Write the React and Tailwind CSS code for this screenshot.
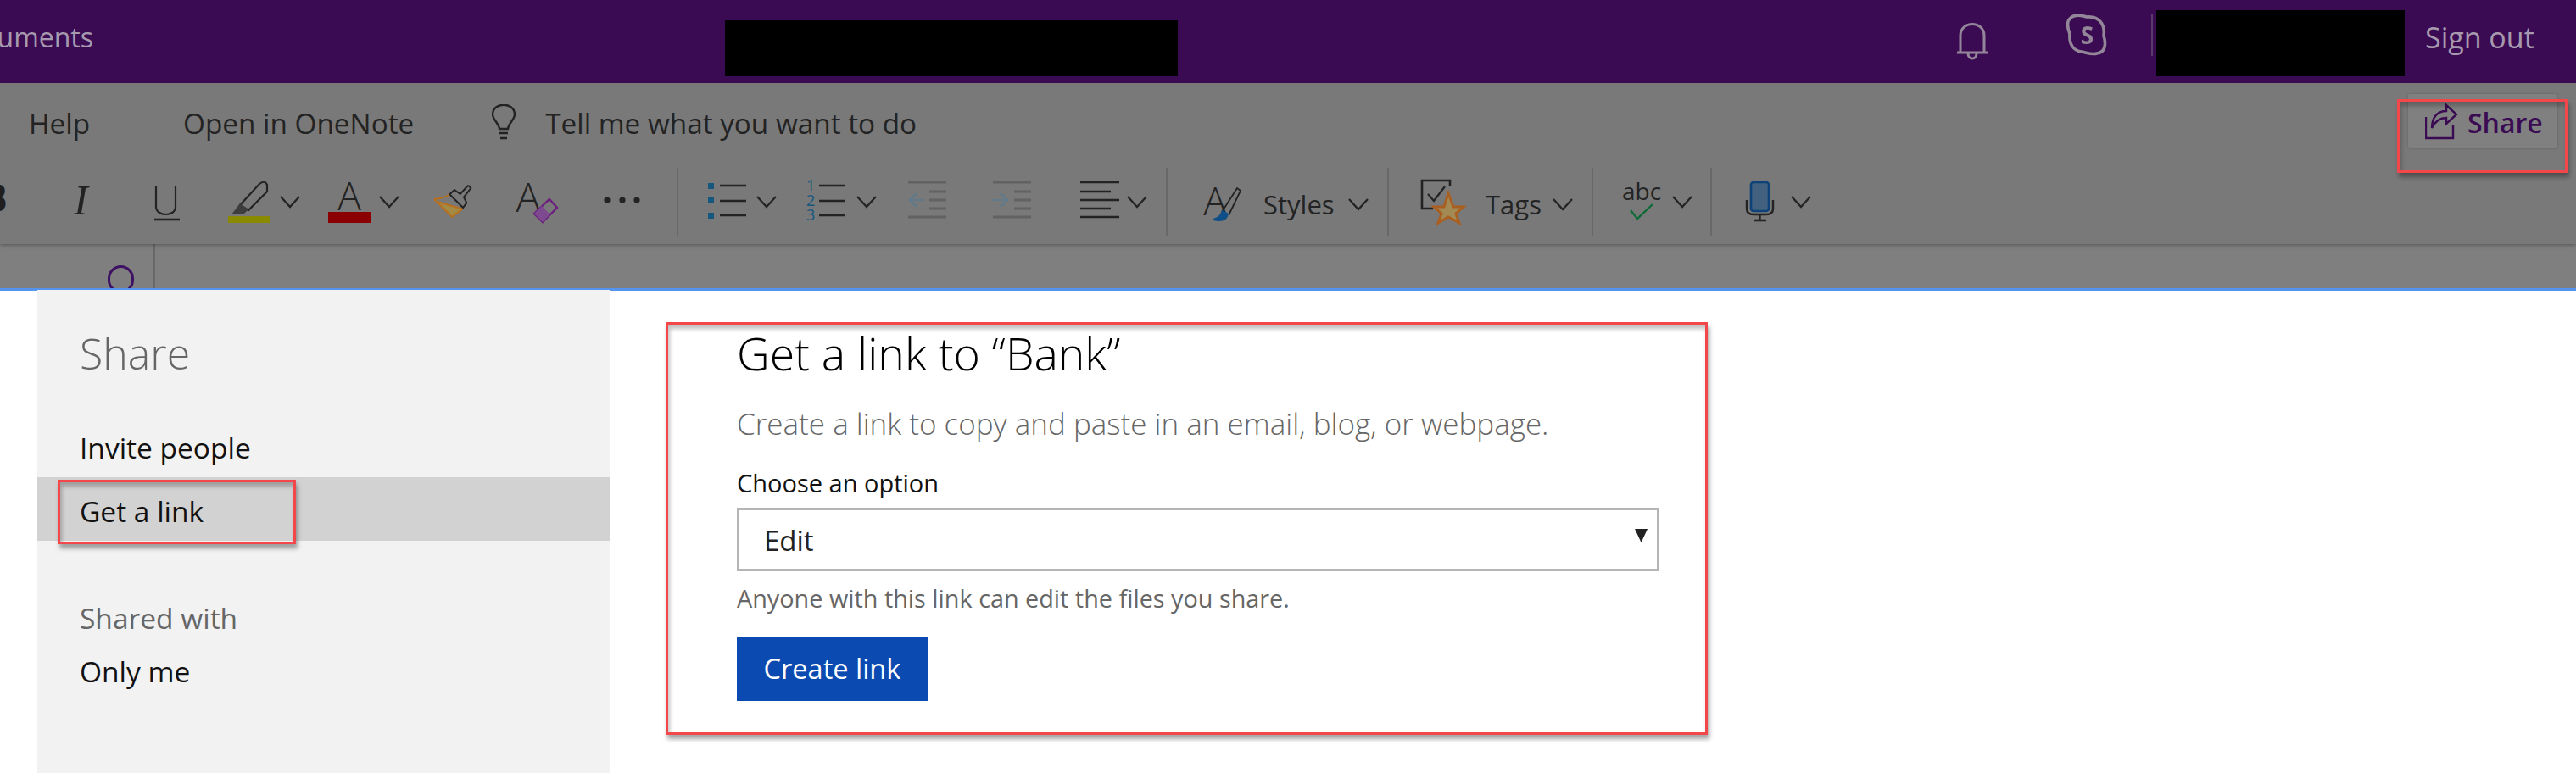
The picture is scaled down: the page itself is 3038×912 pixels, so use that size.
import React from "react";

const ink = "#232323";

function Chevron({ ml, low }) {
  const y = low ? 3 : 0;
  return (
    <svg width="24" height="80" style={{ marginLeft: ml }} className="shrink-0">
      <polyline points={`1,${34 + y} 12,${46 + y} 23,${34 + y}`} fill="none" stroke={ink} strokeWidth="2.2" />
    </svg>
  );
}

function Divider({ ml }) {
  return <div style={{ marginLeft: ml }} className="w-[2px] h-[80px] shrink-0 bg-[#686868]" />;
}

function Ico({ w, ml, children }) {
  return (
    <svg width={w} height="80" style={{ marginLeft: ml }} className="shrink-0 overflow-visible">
      {children}
    </svg>
  );
}

function FormatRow() {
  return (
    <div className="flex items-center h-[80px] text-[#232323]">
      <div className="w-[11px] h-[80px] overflow-hidden shrink-0 relative">
        <svg width="40" height="80" className="-ml-[22px]">
          <text x="0" y="52" fontSize="46" fontWeight="700" fontFamily="Open Sans" fill="#1f1f1f">B</text>
        </svg>
      </div>
      <Ico w={24} ml={76}>
        <text x="0" y="55" fontSize="50" fontStyle="italic" fontFamily="Liberation Serif" fill={ink}>I</text>
      </Ico>
      <Ico w={30} ml={71}>
        <path d="M2 21 V46 C2 58 25 58 25 46 V21" fill="none" stroke={ink} strokeWidth="2.2" />
        <line x1="0" x2="30" y1="61" y2="61" stroke={ink} strokeWidth="2.6" />
      </Ico>
      <Ico w={50} ml={57}>
        <path d="M14 44 L37 19 Q43 14 46 20 L46 28 L24 50 Z" fill="none" stroke={ink} strokeWidth="2.2" />
        <path d="M4 55 L14 42 L24 49 L18 55 Z" fill="#3d3d3d" />
        <rect x="0" y="57" width="50" height="8" fill="#8a8a00" />
      </Ico>
      <Chevron ml={11} />
      <Ico w={50} ml={33}>
        <text x="25" y="50" textAnchor="middle" fontSize="46" fontFamily="Open Sans" fontWeight="300" fill={ink}>A</text>
        <rect x="0" y="52" width="50" height="13" fill="#8b0000" />
      </Ico>
      <Chevron ml={10} />
      <Ico w={44} ml={41}>
        <path d="M4 40.3 L34 48.7 L21.3 57 Z" fill="#a38a45" />
        <path d="M0 37 Q12 36 18.3 31.3 M0 37 L21.3 58 L34 48 M4 40 L34 48.7" fill="none" stroke="#b8701f" strokeWidth="2" />
        <path d="M18.3 31.3 L24 26 L30.7 31 L39 22 Q41 20 43.3 24 L35 34.7 L38.3 41.3 L34 47 Z" fill="none" stroke={ink} strokeWidth="2" />
      </Ico>
      <Ico w={47} ml={55}>
        <text x="12" y="52" textAnchor="middle" fontSize="48" fontFamily="Open Sans" fontWeight="300" fill={ink}>A</text>
        <path d="M37 37 L46 47 L29 64 L19 54 Z" fill="none" stroke="#6b1f7f" strokeWidth="2.4" />
        <path d="M28 45 L37.7 55 L29 64 L19 54 Z" fill="#7d4a8f" />
      </Ico>
      <Ico w={43} ml={54}>
        <circle cx="4" cy="38" r="3.6" fill={ink} />
        <circle cx="22" cy="38" r="3.6" fill={ink} />
        <circle cx="39" cy="38" r="3.6" fill={ink} />
      </Ico>
      <Divider ml={43} />
      {/* lists */}
      <Ico w={45} ml={35}>
        <rect x="0" y="18" width="7" height="7" fill="#15577f" />
        <rect x="0" y="35" width="7" height="7" fill="#15577f" />
        <rect x="0" y="53" width="7" height="7" fill="#15577f" />
        <path d="M14 21 H45 M14 39 H45 M14 56 H45" stroke={ink} strokeWidth="2.4" />
      </Ico>
      <Chevron ml={12} />
      <Ico w={46} ml={35}>
        <text x="0" y="27" fontSize="18" fontFamily="Open Sans" fill="#15577f">1</text>
        <text x="0" y="45" fontSize="18" fontFamily="Open Sans" fill="#15577f">2</text>
        <text x="0" y="62" fontSize="18" fontFamily="Open Sans" fill="#15577f">3</text>
        <path d="M15 21 H46 M15 39 H46 M15 56 H46" stroke={ink} strokeWidth="2.4" />
      </Ico>
      <Chevron ml={13} />
      <Ico w={45} ml={37}>
        <path d="M0 17 H45 M25 28 H45 M25 38 H45 M25 48 H45 M0 58 H45" stroke="#626262" strokeWidth="3" />
        <path d="M19 38 H2 M10 30 L2 38 L10 46" fill="none" stroke="#5f7a8c" strokeWidth="2.2" />
      </Ico>
      <Ico w={45} ml={55}>
        <path d="M0 17 H45 M25 28 H45 M25 38 H45 M25 48 H45 M0 58 H45" stroke="#626262" strokeWidth="3" />
        <path d="M0 38 H17 M9 30 L17 38 L9 46" fill="none" stroke="#5f7a8c" strokeWidth="2.2" />
      </Ico>
      <Ico w={46} ml={58}>
        <path d="M0 17 H46 M0 28 H36 M0 38 H46 M0 48 H36 M0 58 H46" stroke={ink} strokeWidth="2.6" />
      </Ico>
      <Chevron ml={9} />
      <Divider ml={22} />
      {/* styles */}
      <Ico w={45} ml={42}>
        <text x="14" y="56" textAnchor="middle" fontSize="46" fontFamily="Open Sans" fontWeight="300" fill={ink}>A</text>
        <path d="M22 52 L40 24 L44 27 L30 56" fill="none" stroke={ink} strokeWidth="1.8" />
        <path d="M12 60 Q20 58 22 50 L30 54 Q28 66 12 62 Z" fill="#0d4f86" />
      </Ico>
      <span className="ml-[26px] mt-[6px] w-[86px] shrink-0 text-[31px] leading-none whitespace-nowrap">Styles</span>
      <Chevron ml={14} low />
      <Divider ml={22} />
      {/* tags */}
      <Ico w={50} ml={38}>
        <path d="M34 22 V15 H1 V48 H14" fill="none" stroke={ink} strokeWidth="2.6" />
        <polyline points="8,31 15,39 28,22" fill="none" stroke={ink} strokeWidth="2.2" />
        <polygon points="32,30 38,46 50,46 41,54 45,65 32,58 20,65 24,54 15,46 27,46" fill="#a38a55" stroke="#a95f20" strokeWidth="3" />
      </Ico>
      <span className="ml-[26px] mt-[6px] w-[66px] shrink-0 text-[31px] leading-none whitespace-nowrap">Tags</span>
      <Chevron ml={13} low />
      <Divider ml={22} />
      {/* spelling */}
      <Ico w={44} ml={36}>
        <text x="21" y="38" textAnchor="middle" fontSize="28" fontFamily="Open Sans" fill={ink}>abc</text>
        <polyline points="8,50 16,60 34,43" fill="none" stroke="#0e6b38" strokeWidth="2.4" />
      </Ico>
      <Chevron ml={13} />
      <Divider ml={21} />
      {/* dictate */}
      <Ico w={33} ml={40}>
        <rect x="6" y="17" width="21" height="34" rx="3" fill="#41617f" stroke="#0d4378" strokeWidth="2.6" />
        <path d="M1 38 V48 Q1 55 9 55 H24 Q32 55 32 48 V38 M16.5 55 V62 M9 62 H24" fill="none" stroke={ink} strokeWidth="2.4" />
      </Ico>
      <Chevron ml={20} />
    </div>
  );
}

export default function App() {
  return (
    <div className="w-[3038px] h-[912px] overflow-hidden bg-white relative font-['Open_Sans',sans-serif]">
      {/* suite bar */}
      <div className="h-[98px] bg-[#3a0b52] flex items-center text-[#a79aae] relative">
        <div className="w-[110px] shrink-0 overflow-hidden flex justify-end -mt-[10px]">
          <span className="text-[32px] leading-none whitespace-nowrap">Documents</span>
        </div>
        <div className="ml-[745px] w-[534px] h-[66px] mt-[16px] bg-black shrink-0" />
        <div className="ml-[918px] shrink-0">
          <svg width="38" height="44" viewBox="0 0 38 44" fill="none" stroke="#938699" strokeWidth="3">
            <path d="M1 35 H37 M5 35 V15 C5 -3 33 -3 33 15 V35" />
            <path d="M14 36 C14 44 24 44 24 36" />
          </svg>
        </div>
        <div className="ml-[92px] shrink-0 relative w-[49px] h-[50px] -mt-[16px] flex items-center justify-center blur-[0.7px]">
          <svg width="49" height="50" viewBox="0 0 49 50" fill="none" stroke="#938699" strokeWidth="3.6" className="absolute inset-0">
            <path d="M4 6 C10 0 18 2 24 4 C38 3 46 12 44 26 C47 36 46 46 36 47 C30 49 24 46 18 45 C8 44 3 36 4 24 C1 16 0 10 4 6 Z" />
          </svg>
          <span className="text-[28px] font-bold leading-none text-[#938699]">S</span>
        </div>
        <div className="ml-[51px] w-[2px] h-[50px] -mt-[16px] bg-[#5a3a6c] shrink-0" />
        <div className="ml-[4px] w-[293px] h-[78px] bg-black shrink-0 -mb-[4px]" />
        <span className="ml-[24px] -mt-[10px] text-[34px] leading-none whitespace-nowrap">Sign out</span>
      </div>

      {/* ribbon */}
      <div className="h-[190px] bg-[#797979] shadow-[0_2px_4px_rgba(0,0,0,0.25)] relative z-10">
        <div className="h-[100px] flex items-start pt-[29px] text-[#232323] text-[33.3px] leading-[36px] relative">
          <span className="ml-[34px] whitespace-nowrap">Help</span>
          <span className="ml-[110px] whitespace-nowrap">Open in OneNote</span>
          <svg width="28" height="42" viewBox="0 0 28 42" fill="none" stroke="#232323" strokeWidth="2.4" className="ml-[92px] -mt-[4px] shrink-0">
            <path d="M9 29 C8 22 1 18 1 12 C1 -3 27 -3 27 12 C27 18 20 22 19 29 Z" />
            <path d="M9 34 H19 M10 40 H18" />
          </svg>
          <span className="ml-[35px] whitespace-nowrap">Tell me what you want to do</span>
          <div className="absolute left-[2840px] top-[13px] w-[176px] h-[64px] bg-[#808080] rounded-[2px] shadow-[0_0_3px_rgba(0,0,0,0.2)] flex items-center pl-[20px] text-[32px] text-[#3a0b52] font-semibold">
            <svg width="40" height="46" viewBox="0 0 40 46" fill="none" stroke="#3a0b52" strokeWidth="2.4" className="shrink-0">
              <path d="M1 18 V43 H33 V28" />
              <path d="M8 31 C8 19 14 11 25 11 V4 L37 15 L25 26 V19 C18 19 12 23 8 31 Z" />
            </svg>
            <span className="ml-[10px] mt-[3px] whitespace-nowrap">Share</span>
          </div>
        </div>
        <FormatRow />
      </div>

      {/* notebook strip */}
      <div className="h-[52px] bg-[#7f7f7f] flex">
        <div className="w-[183px] h-full border-r-[3px] border-[#686868] pl-[127px] pt-[25px] overflow-hidden shrink-0">
          <div className="w-[31px] h-[33px] rounded-full border-[3px] border-[#3f1163]" />
        </div>
      </div>
      <div className="h-[3px] bg-[#5594ee]" />

      {/* share dialog */}
      <div className="flex -mt-[1px]">
        <aside className="ml-[44px] w-[675px] h-[570px] bg-[#f2f2f2] shrink-0 relative">
          <h2 className="pl-[50px] pt-[40px] h-[145px] text-[50px] leading-[70px] font-light text-[#666666]">Share</h2>
          <div className="pl-[50px] pt-[6px] h-[76px] flex items-center text-[33.5px] text-[#111111]">Invite people</div>
          <div className="pl-[50px] pt-[6px] h-[75px] flex items-center text-[33.5px] text-[#111111] bg-[#d2d2d2]">Get a link</div>
          <div className="pl-[50px] mt-[68px] text-[33.5px] leading-[46px] text-[#666666]">Shared with</div>
          <div className="pl-[50px] mt-[17px] text-[33.5px] leading-[46px] text-[#111111]">Only me</div>
        </aside>
        <section className="ml-[66px] mt-[38px] w-[1229px] h-[487px] border-[3px] border-[#f4474b] shadow-[2px_5px_5px_rgba(0,0,0,0.35),inset_2px_5px_5px_rgba(0,0,0,0.25)] pl-[81px] shrink-0">
          <h1 className="text-[53.5px] leading-[60px] mt-[4px] text-black font-light whitespace-nowrap">Get a link to “Bank”</h1>
          <p className="text-[35px] leading-[46px] mt-[30px] text-[#666666] font-light whitespace-nowrap">Create a link to copy and paste in an email, blog, or webpage.</p>
          <p className="text-[29px] leading-[40px] mt-[27px] text-[#111111] whitespace-nowrap">Choose an option</p>
          <div className="w-[1088px] h-[75px] mt-[9px] border-[3px] border-[#b5b5b5] flex items-center justify-between pl-[29px] pr-[11px] text-[33px] text-[#222222]">
            <span className="pt-[2px]">Edit</span>
            <svg width="15" height="16" viewBox="0 0 15 16" className="-mt-[9px] shrink-0">
              <polygon points="0,0 15,0 7.5,16" fill="#222222" />
            </svg>
          </div>
          <p className="text-[28.8px] leading-[40px] mt-[12px] text-[#666666] whitespace-nowrap">Anyone with this link can edit the files you share.</p>
          <button className="block w-[225px] h-[75px] mt-[26px] bg-[#0b4ab0] text-white text-[32.5px] text-center">Create link</button>
        </section>
      </div>

      {/* annotation boxes */}
      <div className="absolute z-20 left-[2827px] top-[117px] w-[201px] h-[87px] border-[3px] border-[#f4474b] shadow-[2px_5px_5px_rgba(0,0,0,0.35),inset_2px_5px_5px_rgba(0,0,0,0.25)]" />
      <div className="absolute z-20 left-[68px] top-[566px] w-[281px] h-[76px] border-[3px] border-[#f4474b] shadow-[2px_5px_5px_rgba(0,0,0,0.35),inset_2px_5px_5px_rgba(0,0,0,0.25)]" />
    </div>
  );
}
